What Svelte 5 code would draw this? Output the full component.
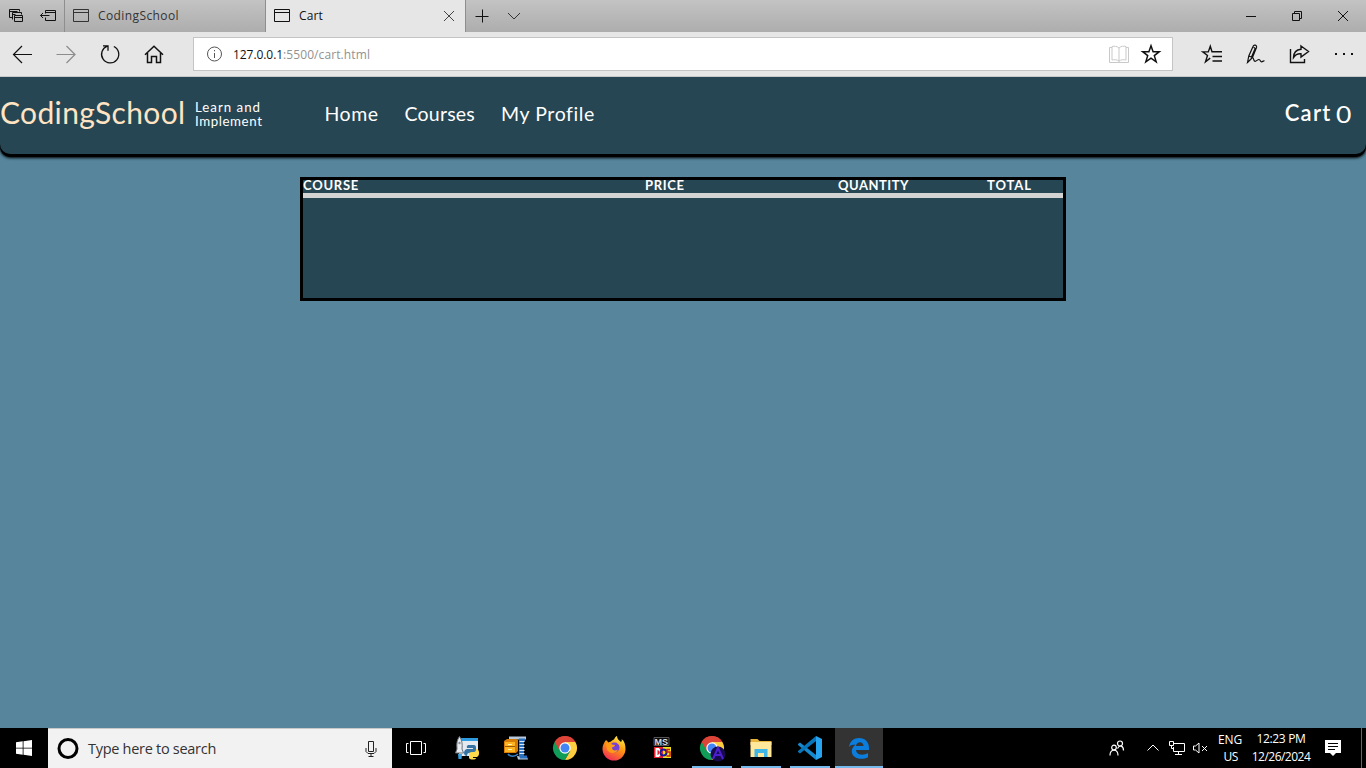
<script>
  // Spreads the letters of a label so that it takes up the given width.
  function fit(node, width) {
    const apply = (w) => {
      node.style.letterSpacing = '0px';
      const natural = node.getBoundingClientRect().width;
      node.style.letterSpacing = (w - natural) / node.textContent.length + 'px';
    };
    apply(width);
    return { update: apply };
  }

  const links = [
    { label: 'Home', width: 54 },
    { label: 'Courses', width: 70.5 },
    { label: 'My Profile', width: 93.5 }
  ];
  const columns = [
    { label: 'COURSE', width: 56 },
    { label: 'PRICE', width: 39.5 },
    { label: 'QUANTITY', width: 71 },
    { label: 'TOTAL', width: 45 }
  ];
</script>

{#snippet windowIcon()}
  <svg class="fav" width="16" height="14" viewBox="0 0 16 14"><path d="M.5.5h15v12H.5zM.5 3.5h15" /></svg>
{/snippet}

{#snippet chrome()}
  <path fill="#db4437" d="M12 12 1.6 6A12 12 0 0 1 22.4 6z" />
  <path fill="#0f9d58" d="M12 12 1.6 6A12 12 0 0 0 12 24l5.2-9z" />
  <path fill="#ffcd40" d="M12 12V6h10.4A12 12 0 0 1 12 24l5.2-9z" />
  <path fill="#db4437" d="M12 6h10.4A12 12 0 0 0 1.6 6L7 15z" />
  <circle cx="12" cy="12" r="5.7" fill="#fff" />
  <circle cx="12" cy="12" r="4.5" fill="#4285f4" />
{/snippet}

<div class="screen">
  <div class="tabstrip">
    <div class="aside">
      <svg width="16" height="16" viewBox="0 0 16 16"><path d="M4.500 9.500h-3v-8h10v2M1.500 3.500h8M4.500 11.500v-7h9v2M4.500 6.500h3M6.500 7.500h8v6h-8zM6.500 9.500h8" /></svg>
      <svg width="18" height="16" viewBox="0 0 18 16"><path d="M5.500 5.500v-3h10v10h-10v-3M5.500 4.500h10M.500 7.500h9M3 5 .500 7.500 3 10" /></svg>
    </div>
    <div class="tab first">{@render windowIcon()}<span use:fit={81}>CodingSchool</span></div>
    <div class="tab active">
      {@render windowIcon()}<span use:fit={24}>Cart</span>
      <svg class="close" width="12" height="12" viewBox="0 0 12 12"><path d="m1 1 10 10M11 1 1 11" /></svg>
    </div>
    <svg class="plus" width="14" height="14" viewBox="0 0 14 14"><path d="M7.500.500v13M.500 7.500h13" /></svg>
    <svg class="down" width="14" height="8" viewBox="0 0 14 8"><path d="m1 1 6 6 6-6" /></svg>
    <div class="controls">
      <svg width="12" height="12" viewBox="0 0 12 12"><path d="M1 6.500h10" /></svg>
      <svg width="12" height="12" viewBox="0 0 12 12"><path d="M1.500 3.500h7v7h-7zM3.500 3.500v-2h7v7h-2" /></svg>
      <svg width="12" height="12" viewBox="0 0 12 12"><path d="m1 1 10 10M11 1 1 11" /></svg>
    </div>
  </div>

  <div class="toolbar">
    <div class="cell"><svg viewBox="0 0 24 24"><path d="M3 12.500h19M12 4l-8.500 8.500L12 21" /></svg></div>
    <div class="cell dim"><svg viewBox="0 0 24 24"><path d="M2.500 12.500H21M12.500 4l8.500 8.500-8.500 8.500" /></svg></div>
    <div class="cell"><svg viewBox="0 0 24 24"><path stroke-width="1.300" d="M15.800 4.500a8.600 8.600 0 1 1-6.500-.300M5 3.800h5v5" /></svg></div>
    <div class="cell"><svg viewBox="0 0 24 24"><path stroke-width="1.500" d="m3 12.800 9-8.600 9 8.600M5.500 11v9.500h4v-6h5v6h4V11" /></svg></div>
    <div class="address">
      <svg class="info" width="16" height="16" viewBox="0 0 16 16"><circle cx="7.500" cy="8" r="7" /><path d="M7.500 7v5M7.500 4v1.300" /></svg>
      <span class="host" use:fit={50}>127.0.0.1</span><span class="path" use:fit={87}>:5500/cart.html</span>
      <svg class="book" width="20" height="19" viewBox="0 0 20 19"><path d="M3 2.500H.5v15h19v-15H17M10 3v14M10 3C8 1 5 1 3 1.500v13.500c2-.500 5-.500 7 1 2-1.500 5-1.500 7-1V1.500C15 1 12 1 10 3" /></svg>
      <svg class="star" width="24" height="24" viewBox="0 0 24 24"><path stroke-width="1.500" d="m12 3.700 2.100 6h6.200l-5 3.900 1.900 6.300-5.200-3.700-5.200 3.700 1.900-6.300-5-3.900h6.200z" /></svg>
    </div>
    <div class="cell hub"><svg viewBox="0 0 24 24"><path stroke-width="1.400" d="M14 9.700H12l-1.700-5.500-2 5.700H2.800l4.700 3.600-2 6.300 4.700-3.700M13 9.700h9M12.500 14.500H22M12.500 19H22" /></svg></div>
    <div class="cell"><svg viewBox="0 0 24 24"><path stroke-width="1.200" d="M3.500 20.500 4.800 14 9 4.500c.800-2.300 4.300-1.500 3.500 1L8.500 15.500zM4.800 14l3.700 1.500M9.500 5.500c2 0 1.500 1 1 2.500l-3 7M3.500 20.500l5-5c2 1 .500 3.500 2.500 3.800 1.500.200 2.500-2 4-1.800 1.500.200 1.200 2.500 2.700 2.300 1-.100 1.500-1.200 2.800-.8" /></svg></div>
    <div class="cell share"><svg viewBox="0 0 24 24"><path stroke-width="1.400" d="M3.500 7v13.500h14V17M14 4l7.500 5.500L14 15v-3.200c-3.500-.300-5.500.700-7.500 3.700.2-5 2.500-7.800 7.500-8.200z" /></svg></div>
    <div class="cell"><svg viewBox="0 0 24 24"><path class="solid" d="M3 11h2v2H3zM11 11h2v2h-2zM19 11h2v2h-2z" /></svg></div>
  </div>

  <div class="page">
    <header>
      <div class="brand" use:fit={185.5}>CodingSchool</div>
      <div class="tagline"><span use:fit={66}>Learn and</span><br /><span use:fit={67.5}>Implement</span></div>
      <nav>
        {#each links as link}<a href="#{link.label}"><span use:fit={link.width}>{link.label}</span></a>{/each}
      </nav>
      <div class="cart"><span use:fit={47}>Cart</span><span class="count">0</span></div>
    </header>
    <section class="basket">
      <div class="head">
        {#each columns as column}<div><span use:fit={column.width}>{column.label}</span></div>{/each}
      </div>
    </section>
  </div>

  <div class="taskbar">
    <div class="start"><svg width="16" height="16" viewBox="0 0 16 16"><path fill="#fff" d="M0 2.300 6.700 1.300v6.400H0zM7.500 1.200 16 0v7.700H7.500zM0 8.500h6.700v6.300L0 13.800zM7.500 8.500H16V16l-8.500-1.200z" /></svg></div>
    <div class="search">
      <svg width="22" height="22" viewBox="0 0 22 22"><circle cx="11" cy="10.500" r="9" fill="none" stroke="#000" stroke-width="3" /></svg>
      <span use:fit={128}>Type here to search</span>
      <svg class="mic" width="12" height="18" viewBox="0 0 12 18"><path d="M3.500 1.500h5v10h-5zM1 8v3.500l2 2h6l2-2V8M6 13.500v3M3.500 16.500h5" /></svg>
    </div>
    <div class="view"><svg width="20" height="14" viewBox="0 0 20 14"><path d="M4.500.500h11v13h-11zM2.500 2.500H.500v9h2M17.500 2.500h2v9h-2" /></svg></div>
    <div class="apps">
      <div><svg viewBox="0 0 24 24">
        <path fill="#e4eaf0" d="M4 2h19v18H4z" /><path fill="#2d9be0" d="M6 2h17v3H6z" />
        <path fill="#e8ebef" stroke="#687078" d="M4.500.500C2 4 1.500 7 2 13l-1.500 4h8L7 13c.600-5 0-9-2.500-12.500z" /><circle cx="4.500" cy="7" r="1.200" fill="#8a929a" />
        <path fill="#3aa4e2" d="M3 18h4l-.5 5h-3z" />
        <path fill="#3573a5" d="M13 9h6q2 0 2 3v3q0 2-3 2h-4q-2 0-2 3c-4 0-4-6 0-7h6v-1h-6q-1-2 1-3z" />
        <path fill="#ffd94c" d="M21 13c4 0 4 7 1 8h-4v1h3c0 2-6 2-7 0v-4q0-2 3-2h2q2 0 2-3z" />
      </svg></div>
      <div><svg viewBox="0 0 24 24">
        <path fill="#b8c9dc" d="M5 .5h17v3H5zM13 20l10 1 1 2.500H14z" /><path fill="#2b70bc" d="M15 2.500h6v3h-1v14h3v3h-7l-1-3z" />
        <path stroke="#d9e9f8" d="M15.500 5.500h5M15.500 8.500h5M15.500 11.500h5M15.500 14.500h5M15.500 17.500h5" />
        <path fill="#d97c05" d="m0 5 3-2h9l2 1v11l-2 2H0z" /><path fill="#ffb521" d="M1 6h10v10H1z" />
        <path stroke="#9b5604" fill="none" d="M1 10.500h10" /><path stroke="#fff2b0" d="M4 8.500h4M4 13.500h4" /><path fill="none" stroke="#387fc7" stroke-width="1.500" d="M4 18c2 3 7 3 10 0" />
      </svg></div>
      <div><svg viewBox="0 0 24 24">{@render chrome()}</svg></div>
      <div><svg viewBox="0 0 24 24">
        <defs><linearGradient id="flame" x1=".8" y1="0" x2=".3" y2="1"><stop offset="0" stop-color="#fff44f" /><stop offset=".45" stop-color="#ff980e" /><stop offset="1" stop-color="#f22c59" /></linearGradient></defs>
        <path fill="url(#flame)" d="M4 4c1 1 2 1.500 2 2.500L9 5.500c1-1 2-2 3-2 .500-1.500 1.500-3 3-3.500 0 3 2 4 4 6 1-1 1-2 .500-3 3 2 4 6 4 10a11.500 11.500 0 0 1-23 0C.500 9 2 7 4 4z" />
        <circle cx="12.500" cy="11.500" r="5" fill="#7542d4" /><path fill="#ff9b16" d="M4 8c3-1.500 4-1 6 .5l3 .5c0 1.500-2 2-3 2.500 0 3 3 4 6 2-1 4-9 5-11 0z" />
      </svg></div>
      <div><svg viewBox="0 0 24 24">
        <path fill="#080808" stroke="#555" d="M3 1.500h15v8H3z" /><text x="3.500" y="9" class="ms">MS</text>
        <path fill="#e5202a" d="M3 11h9v11H3z" /><path fill="#f4e81a" d="M12 11h8v11h-8z" />
        <path fill="none" stroke="#fff" stroke-width="2" d="M5.500 13v7h2q4-3.500 0-7z" /><circle cx="12.500" cy="16.500" r="3" fill="none" stroke="#15199b" stroke-width="2" />
        <path fill="none" stroke="#d01d1d" stroke-width="1.500" d="M19 13.500h-3v2.500h3V20h-3.500" />
      </svg></div>
      <div class="open"><svg viewBox="0 0 24 24">{@render chrome()}<circle cx="18" cy="18" r="7.500" fill="#170a4d" /><path fill="none" stroke="#4c20d1" stroke-width="2" d="m13 23 5-11 5 11M15 19h6" /></svg></div>
      <div class="open"><svg viewBox="0 0 24 24"><path fill="#e9b43c" d="M1.500 3h7l2 2h12v4h-21z" /><path fill="#ffe79b" d="M1.500 6h21v15h-21z" /><path fill="#3eb6e8" d="M5.500 13h13v8H15v-4H9v4H5.500z" /></svg></div>
      <div class="open"><svg viewBox="0 0 24 24"><path fill="#1688ce" d="m0 8 2-1.500L18 19v5L0 9z" /><path fill="#0875bb" d="m0 16 2 1.500L18 5V0L0 15z" /><path fill="#27a4ef" d="m18 0 6 3v18l-6 3z" /></svg></div>
      <div class="open current"><svg viewBox="0 0 24 24"><path fill="#0b7ddd" d="M2 11C3 5 7 2 12 2c6 0 10 4 10 10v2H9c.200 5 7 6 12 3v4.200c-2 1.200-4 1.600-7 1.600-9 0-12.500-9-5.500-14C5.500 8.800 3.500 9 2 11zm7-1h7.500c0-5-7-5-7.500 0z" /></svg></div>
    </div>
    <div class="tray">
      <svg class="people" width="16" height="16" viewBox="0 0 16 16"><circle cx="11" cy="3.500" r="2.500" /><circle cx="5" cy="7.500" r="2.300" /><path d="M1 15.500c0-7 8-7 8 0M8.500 8.500c2-4 6-3 6 2" /></svg>
      <svg class="up" width="12" height="8" viewBox="0 0 12 8"><path d="M.5 6.500 6 1l5.500 5.500" /></svg>
      <svg class="net" width="16" height="14" viewBox="0 0 16 14"><path d="M5 2.500h10.500v8h-11V6M.5.500h4v4h-4zM2.500 4.500v3h2M9.500 10.500v3M6 13.500h7" /></svg>
      <svg class="sound" width="15" height="12" viewBox="0 0 15 12"><path d="M.500 4h2L6 1v10L2.500 8h-2zM9 4l5 5M14 4 9 9" /></svg>
      <div class="lang"><span use:fit={24}>ENG</span><br /><span use:fit={14.5}>US</span></div>
      <div class="clock"><span use:fit={49}>12:23 PM</span><br /><span use:fit={58.5}>12/26/2024</span></div>
      <svg class="note" width="16" height="16" viewBox="0 0 16 16"><path fill="#fff" stroke="none" d="M0 0h16v13h-5l-3 3-3-3H0z" /><path stroke="#000" d="M3 3.500h10M3 6.500h10M3 9.500h7" /></svg>
      <i></i>
    </div>
  </div>
</div>

<style>
  :global(body) { margin: 0; overflow: hidden; }
  .screen { width: 1366px; height: 768px; display: flex; flex-direction: column; font: 12px/16px "Open Sans", "Noto Sans", sans-serif; color: #111; }
  .screen :global(*) { box-sizing: border-box; }
  svg { display: block; flex: none; }
  span { display: inline-block; white-space: nowrap; }

  .tabstrip { height: 32px; display: flex; align-items: center; background: linear-gradient(#c3c3c3, #adadad); }
  .tabstrip svg, .toolbar svg { fill: none; stroke: #111; }
  .aside { width: 64px; height: 32px; display: flex; gap: 16px; align-items: center; padding-left: 8px; }
  .tab { height: 32px; display: flex; align-items: center; border-left: 1px solid #8e8e8e; padding-left: 8px; }
  .tab span { margin-left: 9px; }
  .first { width: 201px; color: #333; }
  .first svg { stroke: #333; }
  .active { width: 201px; background: #e6e6e6; border-right: 1px solid #8e8e8e; }
  .tabstrip .close { margin-left: auto; margin-right: 10px; stroke: #444; }
  .plus { margin-left: 9px; }
  .tabstrip .down { margin-left: 18px; stroke: #333; }
  .controls { margin-left: auto; display: flex; }
  .controls svg { margin: 0 17px; }

  .toolbar { height: 45px; display: flex; align-items: center; background: #e6e6e6; border-bottom: 1px solid #c8c8c8; }
  .cell { width: 44px; display: flex; justify-content: center; }
  .cell svg { width: 24px; height: 24px; stroke-width: 1.2; }
  .toolbar .dim svg { stroke: #8c8c8c; }
  .share { padding-right: 2px; }
  .solid { fill: #111; stroke: none; }
  .address { width: 980px; height: 34px; margin-left: 17px; background: #fff; border: 1px solid #c4c4c4; display: flex; align-items: center; padding: 0 9px 0 13px; }
  .address .info { stroke: #555; margin-right: 10px; }
  .address span { padding-top: 2px; }
  .path { color: #929292; }
  .toolbar .book { stroke: #c9c9c9; margin-left: auto; margin-right: 10px; }
  .hub { margin-left: 17px; }

  .page { height: 651px; background: #56859c; font-family: Lato, sans-serif; color: #fff; overflow: hidden; }
  header { height: 77px; display: flex; background: #264653; border-radius: 0 0 10px 10px; box-shadow: 0 3px 0 #000, 0 4px 3px #000; }
  .brand { color: #ffe4c4; font-size: 30px; line-height: 36px; padding-top: 17px; white-space: nowrap; }
  .tagline { width: 139px; padding: 23px 0 0 9.500px; font-size: 13.300px; line-height: 14px; }
  .tagline span { vertical-align: top; }
  nav { display: flex; gap: 26px; font-size: 19.500px; line-height: 24px; padding-top: 25px; }
  a { color: inherit; text-decoration: none; }
  .cart { margin-left: auto; padding: 23px 16px 0 0; display: flex; font-size: 22px; line-height: 26px; font-weight: 600; }
  .count { margin-left: 5px; font-size: 23px; font-weight: 400; padding-top: 1px; transform: scaleX(1.150); }
  .basket { width: 766px; height: 124px; margin: 23px auto 0; border: 3px solid #000; background: #264653; }
  .head { height: 18px; border-bottom: 5px solid #d3d3d3; display: grid; grid-template-columns: 342px 193px 149px 1fr; font-size: 13px; line-height: 12px; font-weight: 700; }
  .head span { vertical-align: top; line-height: 11px; }

  .taskbar { height: 40px; display: flex; background: #000; color: #fff; }
  .start { width: 48px; display: flex; align-items: center; justify-content: center; }
  .search { width: 344px; background: #f2f2f2; border-top: 1px solid #c8c8c8; color: #333; display: flex; align-items: center; padding: 0 15px 0 9px; font-size: 14.500px; }
  .search span { margin-left: 9px; margin-top: 1px; }
  .mic { margin-left: auto; fill: none; stroke: #222; }
  .view { width: 51px; padding-left: 14px; display: flex; align-items: center; fill: none; stroke: #fff; }
  .apps { display: flex; gap: 1px; }
  .apps div { width: 48px; display: flex; align-items: center; justify-content: center; position: relative; }
  .apps svg { width: 24px; height: 24px; overflow: visible; }
  .apps .open::after { content: ""; position: absolute; left: 4px; right: 4px; bottom: 0; height: 2px; background: #76b9ed; }
  .apps .current { background: #333; }
  .apps .current::after { left: 0; right: 0; }
  .ms { fill: #ddd; font: bold 9px "Liberation Sans", sans-serif; }
  .tray { flex: 1; display: flex; align-items: center; padding-left: 226px; }
  .tray svg { fill: none; stroke: #fff; }
  .people { stroke-width: 1.200; }
  .up { margin-left: 22px; }
  .net { margin-left: 10px; }
  .sound { margin-left: 8px; }
  .lang { width: 36px; padding-right: 2px; text-align: right; line-height: 17px; }
  .lang span:last-child { margin-right: 4px; }
  .lang span, .clock span { vertical-align: top; }
  .clock { width: 60px; margin-left: 7px; text-align: center; line-height: 18px; }
  .note { margin-left: 14px; }
  .tray i { margin-left: auto; margin-right: 4px; width: 1px; height: 40px; background: #666; }
</style>
